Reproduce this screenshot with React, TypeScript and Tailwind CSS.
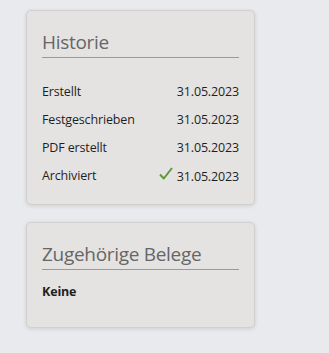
import React from "react";

const font = { fontFamily: '"Open Sans", "Noto Sans", sans-serif' };

function Check() {
  return (
    <svg width="14" height="13" viewBox="0 0 14 13" className="mr-[4px] -mt-[6px]">
      <path d="M1 7.5 L4.8 11.5 L13 1" fill="none" stroke="#5b9a3c" strokeWidth="2" strokeLinejoin="round" />
    </svg>
  );
}

function Row({ label, date, check }: { label: string; date: string; check?: boolean }) {
  return (
    <div className="flex items-center justify-between h-[28px] text-[12.5px] tracking-[-0.15px] text-[#1f1f1f]">
      <span>{label}</span>
      <span className="flex items-center">
        {check && <Check />}
        <span className={check ? "mt-[3px]" : ""}>{date}</span>
      </span>
    </div>
  );
}

export default function App() {
  return (
    <div className="min-h-[353px] w-[329px] bg-[#e8eaed] pt-[10px] pl-[26px]" style={font}>
      <div className="w-[229px] h-[195px] bg-[#e5e3e1] border border-[#d2d0ce] rounded-[5px] shadow-[0_1px_4px_rgba(0,0,0,0.12)] px-[15px] pt-[17px]">
        <div className="text-[19px] tracking-[-0.3px] leading-[28px] text-[#666] border-b border-[#9a9a9a] pb-[1px]">Historie</div>
        <div className="mt-[20px]">
          <Row label="Erstellt" date="31.05.2023" />
          <Row label="Festgeschrieben" date="31.05.2023" />
          <Row label="PDF erstellt" date="31.05.2023" />
          <Row label="Archiviert" date="31.05.2023" check />
        </div>
      </div>
      <div className="mt-[17px] w-[229px] h-[106px] bg-[#e5e3e1] border border-[#d2d0ce] rounded-[5px] shadow-[0_1px_4px_rgba(0,0,0,0.12)] px-[15px] pt-[17px]">
        <div className="text-[19px] tracking-[-0.3px] leading-[28px] text-[#666] border-b border-[#9a9a9a] pb-[1px]">Zugehörige Belege</div>
        <div className="mt-[13px] text-[12.5px] tracking-[-0.15px] font-bold text-[#1f1f1f]">Keine</div>
      </div>
    </div>
  );
}
